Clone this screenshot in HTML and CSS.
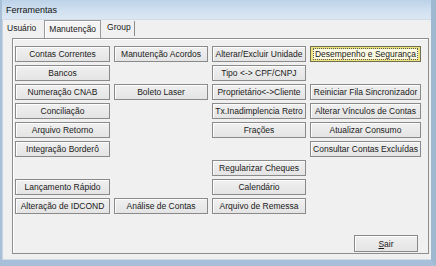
FILE: index.html
```html
<!DOCTYPE html>
<html lang="pt-BR">

<head>
  <meta charset="UTF-8">
  <title>Ferramentas</title>
  <link rel="stylesheet" href="styles.css">
</head>

<body>
  <div class="window">
    <div class="titlebar">Ferramentas</div>

    <div class="client">
      <!-- abas -->
      <ul class="tabs">
        <li class="tab">Usuário</li>
        <li class="tab active">Manutenção</li>
        <li class="tab last">Group</li>
      </ul>

      <div class="panel">
        <div class="grid">
          <button class="btn c1 r1">Contas Correntes</button>
          <button class="btn c1 r2">Bancos</button>
          <button class="btn c1 r3">Numeração CNAB</button>
          <button class="btn c1 r4">Conciliação</button>
          <button class="btn c1 r5">Arquivo Retorno</button>
          <button class="btn c1 r6">Integração Borderô</button>
          <button class="btn c1 r8">Lançamento Rápido</button>
          <button class="btn c1 r9">Alteração de IDCOND</button>

          <button class="btn c2 r1">Manutenção Acordos</button>
          <button class="btn c2 r3">Boleto Laser</button>
          <button class="btn c2 r9">Análise de Contas</button>

          <button class="btn c3 r1">Alterar/Excluir Unidade</button>
          <button class="btn c3 r2">Tipo &lt;-&gt; CPF/CNPJ</button>
          <button class="btn c3 r3">Proprietário&lt;-&gt;Cliente</button>
          <button class="btn c3 r4">Tx.Inadimplencia Retro</button>
          <button class="btn c3 r5">Frações</button>
          <button class="btn c3 r7">Regularizar Cheques</button>
          <button class="btn c3 r8">Calendário</button>
          <button class="btn c3 r9">Arquivo de Remessa</button>

          <button class="btn c4 r1 hot"><span class="focus">Desempenho e Segurança</span></button>
          <button class="btn c4 r3">Reiniciar Fila Sincronizador</button>
          <button class="btn c4 r4">Alterar Vínculos de Contas</button>
          <button class="btn c4 r5">Atualizar Consumo</button>
          <button class="btn c4 r6">Consultar Contas Excluídas</button>
        </div>

        <div class="footer">
          <button class="btn sair"><u>S</u>air</button>
        </div>
      </div>
    </div>
  </div>
</body>

</html>
```

FILE: styles.css
```css
* {
  box-sizing: border-box;
  margin: 0;
  padding: 0;
  list-style: none;
}

body {
  width: 436px;
  height: 266px;
  overflow: hidden;
  font-family: "Liberation Sans", Arial, sans-serif;
  font-size: 8.5px;
  color: #1a1a1a;
  background-color: #6d8cae;
}

.window {
  width: 436px;
  height: 266px;
  display: flex;
  flex-direction: column;
  border-left: 2px solid #a9bfd6;
  border-right: 5px solid #9fb8d2;
  border-bottom: 6px solid #a7bfd8;
  box-shadow: inset 1px 0 0 #50708f, inset -1px 0 0 #50708f, inset 0 -1px 0 #50708f;
  background-color: #f0f0f0;
}

.titlebar {
  height: 20px;
  flex: none;
  padding-left: 4px;
  line-height: 20px;
  font-size: 9px;
  color: #111;
  background: linear-gradient(#bcd2e9, #d2e1f0 60%, #dbe7f3);
  border-bottom: 1px solid #cfdbe7;
}

.client {
  flex: 1;
  display: flex;
  flex-direction: column;
  padding: 0 2px 5px 9px;
  background-color: #f0f0f0;
  border-left: 1px solid #c6d3e0;
  border-bottom: 1px solid #d2dce6;
}

/* abas */
.tabs {
  height: 18px;
  flex: none;
  display: flex;
  align-items: flex-end;
  margin-left: -9px;
}

.tab {
  height: 17px;
  line-height: 15px;
  padding: 0 4px;
}

.tab.active {
  margin-left: 4px;
  height: 18px;
  line-height: 16px;
  padding: 0 4px;
  border: 1px solid #9a9a9a;
  border-bottom: none;
  box-shadow: inset 1px 1px 0 #ffffff;
  background-color: #f4f4f4;
}

.tab.last {
  margin-left: 2px;
  border-right: 1px solid #8c8c8c;
  padding-right: 3px;
  height: 15px;
  margin-bottom: 2px;
  line-height: 13px;
}

.panel {
  flex: 1;
  display: flex;
  flex-direction: column;
  padding: 7px 10px 1px 2px;
  border: 1px solid #8e8e8e;
  box-shadow: inset 1px 1px 0 #ffffff;
}

.grid {
  display: grid;
  grid-template-columns: 95px 94px 94px 111px;
  grid-template-rows: repeat(9, 16px);
  column-gap: 4px;
  row-gap: 3px;
}

.btn {
  font-family: inherit;
  font-size: 8.5px;
  color: #1a1a1a;
  background: linear-gradient(#f0f0f0, #e4e4e4);
  border: 1px solid #8a8a8a;
  box-shadow: inset 1px 1px 0 #fdfdfd;
  white-space: nowrap;
  overflow: hidden;
}

.c1 { grid-column: 1; }
.c2 { grid-column: 2; }
.c3 { grid-column: 3; }
.c4 { grid-column: 4; }

.r1 { grid-row: 1; }
.r2 { grid-row: 2; }
.r3 { grid-row: 3; }
.r4 { grid-row: 4; }
.r5 { grid-row: 5; }
.r6 { grid-row: 6; }
.r7 { grid-row: 7; }
.r8 { grid-row: 8; }
.r9 { grid-row: 9; }

.btn.hot {
  display: flex;
  align-items: center;
  justify-content: center;
  background: #fdfbe4;
  border: 1px solid #6e6e50;
  box-shadow: inset 0 0 0 2px #efe27c;
}

.btn.hot .focus {
  padding: 0 1px;
  line-height: 10px;
  border: 1px dotted #5a5a5a;
}

.footer {
  margin-top: auto;
  display: flex;
  justify-content: flex-end;
}

.btn.sair {
  width: 64px;
  height: 17px;
}
```
